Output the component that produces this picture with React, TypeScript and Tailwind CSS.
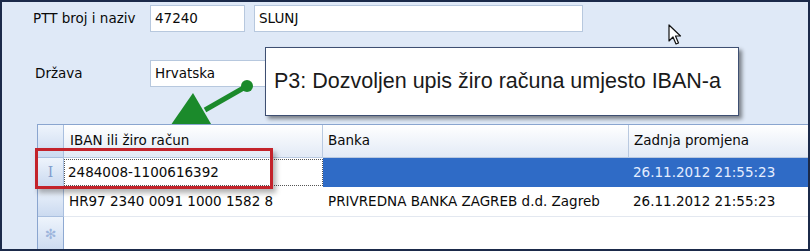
import React from "react";

const font = "font-['DejaVu_Sans',Tahoma,sans-serif]";

function Field({ value, width }: { value: string; width: string }) {
  return (
    <div
      className={`h-[27px] ${width} bg-white border border-[#b7c8de] flex items-center pl-[4px] text-[13.5px] text-[#0a0a0a]`}
    >
      {value}
    </div>
  );
}

function RowMarker({ children, last }: { children?: React.ReactNode; last?: boolean }) {
  return (
    <div
      className={`flex items-center justify-center bg-gradient-to-b from-[#eef4fc] to-[#cbdaf0] border-r border-[#8ea9d2] ${
        last ? "" : "border-b border-[#a9bfdf]"
      }`}
    >
      {children}
    </div>
  );
}

export default function App() {
  return (
    <div
      className={`relative w-[810px] h-[251px] overflow-hidden border-2 border-[#1b2a4a] bg-[#dfe9f7] ${font}`}
    >
      {/* form */}
      <div className="flex flex-col pt-[3px] pl-[31px] gap-[28px]">
        <div className="flex items-center">
          <span className="w-[117px] text-[13.5px] text-[#0a0a0a]">PTT broj i naziv</span>
          <Field value="47240" width="w-[95px]" />
          <div className="w-[9px]" />
          <Field value="SLUNJ" width="w-[329px]" />
        </div>
        <div className="flex items-center">
          <span className="w-[117px] pl-[2px] text-[13.5px] text-[#0a0a0a]">Država</span>
          <Field value="Hrvatska" width="w-[150px]" />
        </div>
      </div>

      {/* grid */}
      <div className="relative z-10 ml-[35px] mt-[37px] w-[790px] h-[127px] border-t border-l border-[#8aa5cf] bg-white text-[13.5px] text-[#0a0a0a]">
        <div className="grid grid-cols-[26px_259px_306px_1fr] grid-rows-[33px_29px_30px_1fr] h-full">
          <RowMarker />
          <div className="flex items-end pb-[7px] pl-[6px] bg-gradient-to-b from-white to-[#e2eaf6] border-b border-r border-[#b9c9e0]">
            IBAN ili žiro račun
          </div>
          <div className="flex items-end pb-[7px] pl-[5px] bg-gradient-to-b from-white to-[#e2eaf6] border-b border-r border-[#b9c9e0]">
            Banka
          </div>
          <div className="flex items-end pb-[7px] pl-[5px] bg-gradient-to-b from-white to-[#e2eaf6] border-b border-[#b9c9e0]">
            Zadnja promjena
          </div>

          <RowMarker>
            <span className="text-[#7f9ccc] text-[14px] font-['DejaVu_Serif',serif]">I</span>
          </RowMarker>
          <div className="flex items-center">
            <div className="flex items-center w-full h-[27px] pl-[3px] border border-dotted border-[#555]">
              2484008-1100616392
            </div>
          </div>
          <div className="bg-[#2f6bc6]" />
          <div className="flex items-center pl-[4px] bg-[#2f6bc6] text-[#e4edff]">26.11.2012 21:55:23</div>

          <RowMarker />
          <div className="flex items-center pl-[5px] border-b border-[#e3e8f0]">HR97 2340 0091 1000 1582 8</div>
          <div className="flex items-center pl-[5px] border-b border-[#e3e8f0]">
            PRIVREDNA BANKA ZAGREB d.d. Zagreb
          </div>
          <div className="flex items-center pl-[4px] border-b border-[#e3e8f0]">26.11.2012 21:55:23</div>

          <RowMarker last>
            <span className="text-[#9db5dc] text-[14px]">✻</span>
          </RowMarker>
          <div />
          <div />
          <div />
        </div>
      </div>

      {/* green arrow */}
      <svg className="absolute left-0 top-0 z-0 pointer-events-none" width="810" height="251">
        <line x1="245" y1="84" x2="203" y2="108" stroke="#1b8a2b" strokeWidth="5" />
        <circle cx="245" cy="84" r="6" fill="#1b8a2b" />
        <polygon points="191,91 212,127 164,130" fill="#1b8a2b" />
      </svg>

      {/* callout */}
      <div className="absolute z-20 left-[263px] top-[45px] w-[474px] h-[69px] bg-white border border-[#3e4f72] shadow-[3px_3px_4px_rgba(0,0,0,0.45)] flex items-center pl-[8px] font-['Liberation_Sans',Arial,sans-serif] text-[21.5px] text-[#1a1a1a]">
        P3: Dozvoljen upis žiro računa umjesto IBAN-a
      </div>

      {/* red highlight */}
      <div className="absolute z-20 left-[33px] top-[146px] w-[238px] h-[41px] border-[3px] border-[#c3232b] shadow-[3px_4px_5px_rgba(0,0,0,0.3)]" />

      {/* mouse pointer */}
      <svg className="absolute z-30 left-[666px] top-[22px]" width="16" height="22" viewBox="0 0 16 22">
        <path d="M1 1 L1 17 L5 13 L8 20 L10.5 19 L7.5 12 L12.5 12 Z" fill="white" stroke="#111" strokeWidth="1.2" strokeLinejoin="round" />
      </svg>
    </div>
  );
}
